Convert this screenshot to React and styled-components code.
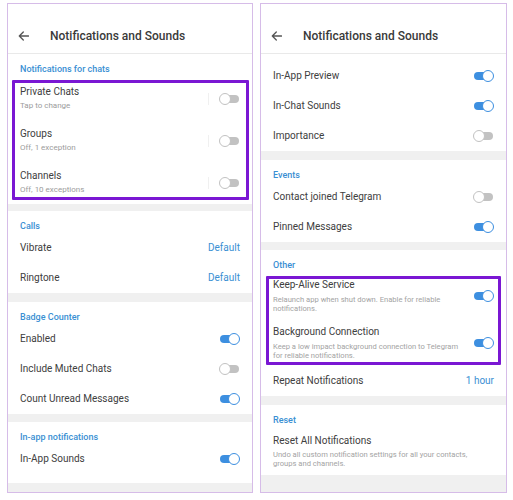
import React from "react";
import styled, { createGlobalStyle } from "styled-components";

const GlobalStyle = createGlobalStyle`
  body {
    margin: 0;
    background: #fff;
    font-family: Roboto, "Liberation Sans", sans-serif;
  }
`;

const Page = styled.div`
  display: flex;
  gap: 7px;
  padding: 3px 0 0 7px;
`;

const Panel = styled.div`
  width: ${(p) => p.$w}px;
  height: 490px;
  box-sizing: border-box;
  border: 1px solid #d6bce8;
  background: #f0f0f0;
  display: flex;
  flex-direction: column;
  overflow: hidden;
`;

const Header = styled.div`
  height: 50px;
  box-sizing: border-box;
  padding: 22px 0 7px 10px;
  background: #fff;
  border-bottom: 1px solid #e9e9e9;
  display: flex;
  align-items: center;
  gap: 21px;
`;

const Title = styled.div`
  font-size: 12px;
  font-weight: 500;
  color: #3a3a3a;
  line-height: 20px;
`;

const Section = styled.div`
  background: #fff;
  margin-top: ${(p) => p.$gap || 0}px;
  padding-top: ${(p) => p.$pt || 0}px;
  padding-bottom: ${(p) => p.$pb || 0}px;
`;

const SectionTitle = styled.div`
  padding: 8px 12px 0;
  line-height: 14px;
  font-size: 9px;
  font-weight: 500;
  color: #3a8fd3;
`;

const Highlight = styled.div`
  position: relative;
  margin-top: ${(p) => p.$mt || 0}px;

  &::after {
    content: "";
    position: absolute;
    top: ${(p) => p.$inset[0]}px;
    right: ${(p) => p.$inset[1]}px;
    bottom: ${(p) => p.$inset[2]}px;
    left: ${(p) => p.$inset[3]}px;
    border: 3px solid #7a17d3;
    border-radius: 1px;
    pointer-events: none;
  }
`;

const Row = styled.div`
  display: flex;
  align-items: center;
  justify-content: space-between;
  height: ${(p) => p.$h || 30}px;
  padding: 0 12px;
  box-sizing: border-box;
`;

const Texts = styled.div`
  display: flex;
  flex-direction: column;
  max-width: ${(p) => p.$max || 194}px;
`;

const Label = styled.div`
  font-size: 10px;
  line-height: 14px;
  color: #404040;
`;

const Sub = styled.div`
  font-size: 8px;
  line-height: 14px;
  color: #9c9c9c;
`;

const Desc = styled.div`
  font-size: 7.6px;
  line-height: 9px;
  color: #a3a3a3;
  margin-top: 2.5px;
`;

const Value = styled.div`
  font-size: 10px;
  line-height: 14px;
  color: #3a8fd3;
`;

const Trail = styled.div`
  display: flex;
  align-items: center;
  gap: 10px;
`;

const Sep = styled.div`
  width: 1px;
  height: 12px;
  background: #f0f0f0;
`;

const Track = styled.div`
  position: relative;
  width: 21px;
  height: 12px;
  flex-shrink: 0;

  &::before {
    content: "";
    position: absolute;
    left: 1px;
    right: 1px;
    top: 2px;
    height: 8px;
    border-radius: 4px;
    background: ${(p) => (p.$on ? "#3d8fe0" : "#c2c2c2")};
  }
`;

const Knob = styled.div`
  position: absolute;
  top: 0;
  ${(p) => (p.$on ? "right: 0;" : "left: 0;")}
  width: 12px;
  height: 12px;
  box-sizing: border-box;
  border-radius: 50%;
  background: #fff;
  border: 1.5px solid ${(p) => (p.$on ? "#3d8fe0" : "#c2c2c2")};
`;

function Toggle({ on }) {
  return (
    <Track $on={on}>
      <Knob $on={on} />
    </Track>
  );
}

function BackArrow() {
  return (
    <svg width="11" height="10" viewBox="0 0 11 10" fill="none">
      <path
        d="M10.5 5H1.3M5.3 1L1.3 5l4 4"
        stroke="#555"
        strokeWidth="1.3"
        strokeLinecap="round"
        strokeLinejoin="round"
      />
    </svg>
  );
}

function Item({ label, sub, desc, value, on, sep, h, max }) {
  const height = h || (sub ? 42 : 30);
  return (
    <Row $h={height}>
      <Texts $max={max}>
        <Label>{label}</Label>
        {sub && <Sub>{sub}</Sub>}
        {desc && <Desc>{desc}</Desc>}
      </Texts>
      {value ? (
        <Value>{value}</Value>
      ) : on !== undefined ? (
        <Trail>
          {sep && <Sep />}
          <Toggle on={on} />
        </Trail>
      ) : null}
    </Row>
  );
}

function Screen({ w, children }) {
  return (
    <Panel $w={w}>
      <Header>
        <BackArrow />
        <Title>Notifications and Sounds</Title>
      </Header>
      {children}
    </Panel>
  );
}

export default function App() {
  return (
    <>
      <GlobalStyle />
      <Page>
        <Screen w={246}>
          <Section>
            <SectionTitle>Notifications for chats</SectionTitle>
            <Highlight $mt={2} $inset={[2, 3, 4, 4]}>
              <Item label="Private Chats" sub="Tap to change" on={false} sep />
              <Item label="Groups" sub="Off, 1 exception" on={false} sep />
              <Item label="Channels" sub="Off, 10 exceptions" on={false} sep />
            </Highlight>
          </Section>
          <Section $gap={7}>
            <SectionTitle>Calls</SectionTitle>
            <Item label="Vibrate" value="Default" />
            <Item label="Ringtone" value="Default" />
          </Section>
          <Section $gap={9}>
            <SectionTitle>Badge Counter</SectionTitle>
            <Item label="Enabled" on />
            <Item label="Include Muted Chats" on={false} />
            <Item label="Count Unread Messages" on />
          </Section>
          <Section $gap={8} $pb={9}>
            <SectionTitle>In-app notifications</SectionTitle>
            <Item label="In-App Sounds" on />
          </Section>
        </Screen>

        <Screen w={247}>
          <Section $pt={7}>
            <Item label="In-App Preview" on />
            <Item label="In-Chat Sounds" on />
            <Item label="Importance" on={false} />
          </Section>
          <Section $gap={9}>
            <SectionTitle>Events</SectionTitle>
            <Item label="Contact joined Telegram" on={false} />
            <Item label="Pinned Messages" on />
          </Section>
          <Section $gap={8}>
            <SectionTitle>Other</SectionTitle>
            <Highlight $inset={[4, 5, 1, 5]}>
              <Item
                label="Keep-Alive Service"
                desc="Relaunch app when shut down. Enable for reliable notifications."
                on
                h={47}
              />
              <Item
                label="Background Connection"
                desc="Keep a low impact background connection to Telegram for reliable notifications."
                on
                h={47}
              />
            </Highlight>
            <Item label="Repeat Notifications" value="1 hour" />
          </Section>
          <Section $gap={9}>
            <SectionTitle>Reset</SectionTitle>
            <Item
              label="Reset All Notifications"
              desc="Undo all custom notification settings for all your contacts, groups and channels."
              h={48}
              max={210}
            />
          </Section>
        </Screen>
      </Page>
    </>
  );
}
